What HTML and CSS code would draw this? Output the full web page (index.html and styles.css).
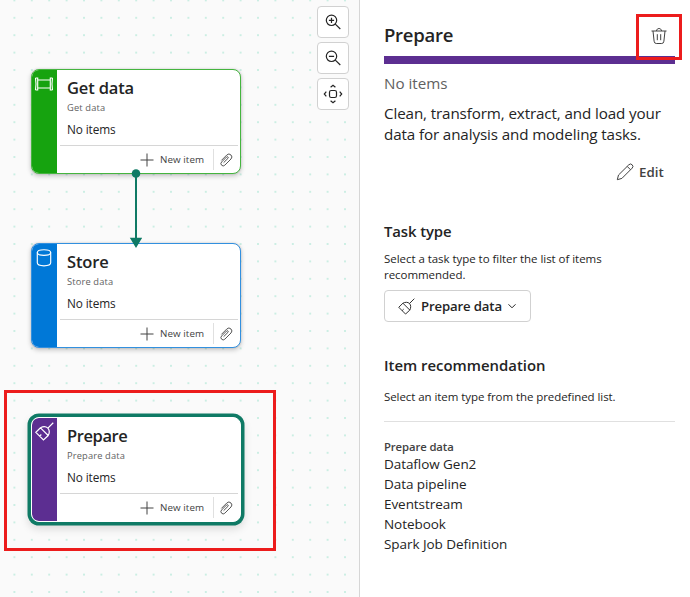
FILE: index.html
```
<!DOCTYPE html>
<html lang="en">
<head>
<meta charset="utf-8">
<title>Task flow</title>
<link rel="stylesheet" href="styles.css">
</head>
<body>
<svg class="symbols" aria-hidden="true">
  <symbol id="clip" viewBox="0 0 14 14"><path d="M4.600 9.700 9 5.300a.9.900 0 0 0-1.400-1.300L2.600 9a2.200 2.200 0 0 0 3.200 3.200L12 6A2.900 2.900 0 0 0 7.900 1.900L2.400 7.400"/></symbol>
  <symbol id="plus" viewBox="0 0 14 14"><path d="M7 .5v13M.5 7h13"/></symbol>
  <symbol id="broom" viewBox="0 0 18 18"><path d="M17.300.7 12.200 5.800M.8 9.800 8 17 12.500 12.800C13.800 10.400 13.800 7.600 12.200 5.800 10.400 4.200 7.600 4.200 5.200 5.500ZM5.200 5.500 12.500 12.800M4.400 13.400 6 11.800"/></symbol>
</svg>
<div class="app">
  <main class="canvas">
    <svg class="dots" width="359" height="597">
      <defs><pattern id="grid" x="5.700" y="-8.300" width="17.400" height="17.400" patternUnits="userSpaceOnUse"><circle cx="8.700" cy="8.700" r=".8"/></pattern></defs>
      <rect width="359" height="597" fill="url(#grid)"/>
    </svg>

    <section class="node get">
      <div class="stripe"><svg width="20" height="16" viewBox="0 0 20 16"><path d="M4 4h12M4 12h12M1.500 2h2.200v12H1.500M1.500 2q1 6 0 12M18.500 2h-2.200v12h2.200M18.500 2q-1 6 0 12"/></svg></div>
      <div class="body">
        <h2>Get data</h2><p class="kind">Get data</p><p class="count">No items</p>
        <footer><svg class="plus"><use href="#plus"/></svg><span>New item</span><i></i><svg class="clip"><use href="#clip"/></svg></footer>
      </div>
    </section>

    <section class="node store">
      <div class="stripe"><svg width="20" height="20" viewBox="0 0 20 20"><ellipse cx="10" cy="4.500" rx="6.700" ry="2.800"/><path d="M3.300 4.500v10.300c0 4 13.400 4 13.400 0V4.500"/></svg></div>
      <div class="body">
        <h2>Store</h2><p class="kind">Store data</p><p class="count">No items</p>
        <footer><svg class="plus"><use href="#plus"/></svg><span>New item</span><i></i><svg class="clip"><use href="#clip"/></svg></footer>
      </div>
    </section>

    <section class="node prepare">
      <div class="stripe"><svg width="19" height="19"><use href="#broom"/></svg></div>
      <div class="body">
        <h2>Prepare</h2><p class="kind">Prepare data</p><p class="count">No items</p>
        <footer><svg class="plus"><use href="#plus"/></svg><span>New item</span><i></i><svg class="clip"><use href="#clip"/></svg></footer>
      </div>
    </section>

    <svg class="edge" width="14" height="80" viewBox="0 0 14 80"><circle cx="7" cy="5.500" r="4.300"/><path d="M6 5h2v66H6ZM.8 69.800h12.400L7 80Z"/></svg>

    <div class="tools">
      <button><svg width="18" height="18" viewBox="0 0 18 18"><circle cx="7.500" cy="7.300" r="5.200"/><path d="M11.300 11.100 16.300 16M7.500 4.700v5.200M4.900 7.300h5.200"/></svg></button>
      <button><svg width="18" height="18" viewBox="0 0 18 18"><circle cx="7.500" cy="7.300" r="5.200"/><path d="M11.300 11.100 16.300 16M4.900 7.300h5.200"/></svg></button>
      <button><svg width="20" height="20" viewBox="0 0 20 20"><rect x="6.500" y="6.500" width="7" height="7" rx="1.800"/><path d="M7.600 3.300 10 1.300l2.400 2M7.600 16.700l2.400 2 2.400-2M3.300 7.600l-2 2.400 2 2.400M16.700 7.600l2 2.400-2 2.400"/></svg></button>
    </div>
    <div class="mark mark-node"></div>
  </main>

  <aside class="panel">
    <header><h1>Prepare</h1>
      <svg class="trash" width="18" height="18" viewBox="0 0 18 18"><path d="M1.500 4h15M6.500 4c0-3.300 5-3.300 5 0M3 4l1.100 10.200q.2 2.300 2.200 2.300h5.400q2 0 2.200-2.300L15 4M7.300 7.200v6M10.700 7.200v6"/></svg>
    </header>
    <p class="status">No items</p>
    <p class="about">Clean, transform, extract, and load your<br>data for analysis and modeling tasks.</p>
    <div class="edit"><svg width="18" height="18" viewBox="0 0 18 18"><path d="M1.300 16.700 2.500 12 12.800 1.800a2.300 2.300 0 0 1 3.400 3.300L5.900 15.400ZM11.200 3.400l3.400 3.400"/></svg><span>Edit</span></div>
    <h3 class="task-title">Task type</h3>
    <p class="hint task-hint">Select a task type to filter the list of items<br>recommended.</p>
    <button class="select"><svg class="broom" width="17" height="17"><use href="#broom"/></svg><span>Prepare data</span><svg width="10" height="10" viewBox="0 0 10 10"><path d="m1.500 3.300 3.500 3.500 3.500-3.500"/></svg></button>
    <h3 class="rec-title">Item recommendation</h3>
    <p class="hint rec-hint">Select an item type from the predefined list.</p>
    <hr>
    <h4>Prepare data</h4>
    <ul><li>Dataflow Gen2</li><li>Data pipeline</li><li>Eventstream</li><li>Notebook</li><li>Spark Job Definition</li></ul>
    <div class="mark mark-delete"></div>
  </aside>
</div>
</body>
</html>
```
FILE: styles.css
```
* { box-sizing: border-box; }
body { margin: 0; font-family: "Open Sans", "Noto Sans", sans-serif; color: #242424; }
h1, h2, h3, h4, p, ul { margin: 0; padding: 0; font-weight: 600; }
p, ul { font-weight: 400; }
li { list-style: none; }
svg { fill: none; stroke: currentColor; stroke-width: 1; flex: none; display: block; }
.symbols { position: absolute; width: 0; height: 0; }
.app { display: grid; grid-template-columns: 360px 330px; width: 690px; height: 597px; overflow: hidden; }
.canvas { position: relative; background: #fafafa; border-right: 1px solid #d6d6d6; }
.dots { stroke: none; }
.dots circle { fill: #8fdfc6; }

.node { position: absolute; left: 31px; width: 209.500px; height: 105px; display: flex; border: 1px solid var(--c); border-radius: 8px; background: #fff; overflow: hidden; box-shadow: 0 2px 5px rgba(0,0,0,.22), 0 0 2px rgba(0,0,0,.16); }
.get { --c: #16a30f; top: 69px; border-color: #45b53f; }
.store { --c: #0078d7; top: 243px; border-color: #3290df; }
.prepare { --c: #5c2e91; top: 417px; border-color: #fff; box-shadow: 0 0 0 3.500px #0f7a65, 0 4px 8px 3px rgba(0,0,0,.13); }
.stripe { width: 25px; background: var(--c); color: #fff; display: flex; justify-content: center; align-items: flex-start; padding-top: 4px; flex: none; }
.stripe svg { stroke-width: 1.150; margin-left: -1px; }
.get .stripe { padding-top: 6px; }
.prepare .stripe { border-radius: 6px 0 0 6px; padding-top: 4px; }
.body { flex: 1; display: flex; flex-direction: column; padding-left: 3px; }
.body h2, .body p { padding-left: 7px; white-space: nowrap; }
.body h2 { font-size: 16.500px; line-height: 23px; margin-top: 6px; letter-spacing: -.15px; }
.body .kind { font-size: 9.300px; line-height: 14px; color: #616161; margin-top: 2px; letter-spacing: .15px; }
.body .count { font-size: 11.800px; line-height: 18px; margin-top: 5px; letter-spacing: -.1px; }
.prepare h2 { letter-spacing: -.4px; }
.body footer { height: 29px; margin: 7px 2px 0 0; border-top: 1px solid #d6d6d6; display: flex; align-items: center; color: #424242; }
footer .plus { width: 14px; height: 14px; margin-left: 80px; }
footer span { width: 45px; margin: 1px 0 0 6px; font-size: 9.800px; line-height: 14px; letter-spacing: .07px; white-space: nowrap; }
footer i { width: 1px; height: 21px; background: #e0e0e0; margin: 0 5px 0 8px; }
footer .clip { width: 14px; height: 14px; stroke-width: .9; }
.edge { position: absolute; left: 129px; top: 168px; fill: #0f7a65; stroke: none; }
.tools { position: absolute; left: 317px; top: 6px; display: flex; flex-direction: column; gap: 4px; }
.tools button { width: 32px; height: 32px; padding: 0; display: grid; place-items: center; background: #fff; border: 1px solid #d1d1d1; border-radius: 4px; color: #242424; }
.tools svg { stroke-width: 1.200; }
.mark { position: absolute; border: 3px solid #ec1c1c; }
.mark-node { left: 4px; top: 390px; width: 272px; height: 161px; }

.panel { position: relative; background: #fff; padding: 0 15px 0 24px; white-space: nowrap; }
.panel header { height: 64px; border-bottom: 8px solid #5c2e91; display: flex; align-items: center; justify-content: space-between; padding: 14px 7px 0 0; }
h1 { font-size: 18.500px; line-height: 28px; letter-spacing: -.25px; }
.trash { color: #424242; margin-top: 2px; }
.status { font-size: 15.200px; line-height: 22px; color: #616161; margin-top: 8px; letter-spacing: -.01px; }
.about { font-size: 15.200px; line-height: 21px; margin-top: 9px; letter-spacing: -.12px; }
.edit { display: flex; justify-content: flex-end; align-items: center; gap: 5px; height: 20px; margin: 17px 12px 0 0; font-size: 13.300px; font-weight: 600; color: #424242; }
.edit span { width: 24px; }
h3 { font-size: 14.900px; line-height: 22px; }
.task-title { margin-top: 38px; letter-spacing: -.1px; }
.hint { font-size: 11.500px; line-height: 16px; letter-spacing: -.045px; }
.task-hint { margin-top: 9px; }
.select { width: 147px; height: 32px; margin-top: 7px; padding: 0 0 0 13px; background: #fff; border: 1px solid #d1d1d1; border-radius: 4px; display: flex; align-items: center; font: 600 13.200px "Open Sans", sans-serif; letter-spacing: -.15px; color: #242424; }
.select span { width: 81px; text-align: left; margin: 0 5px 0 6px; }
.rec-title { margin-top: 32px; letter-spacing: 0; }
.rec-hint { margin-top: 13px; letter-spacing: -.07px; }
hr { border: 0; height: 1px; background: #e0e0e0; margin: 16px 0 17px; }
h4 { font-size: 11.300px; line-height: 16px; letter-spacing: -.1px; color: #424242; }
ul { font-size: 13.500px; line-height: 20px; margin-top: -1px; letter-spacing: -.06px; }
.mark-delete { left: 276px; top: 14px; width: 46px; height: 46px; }
```
